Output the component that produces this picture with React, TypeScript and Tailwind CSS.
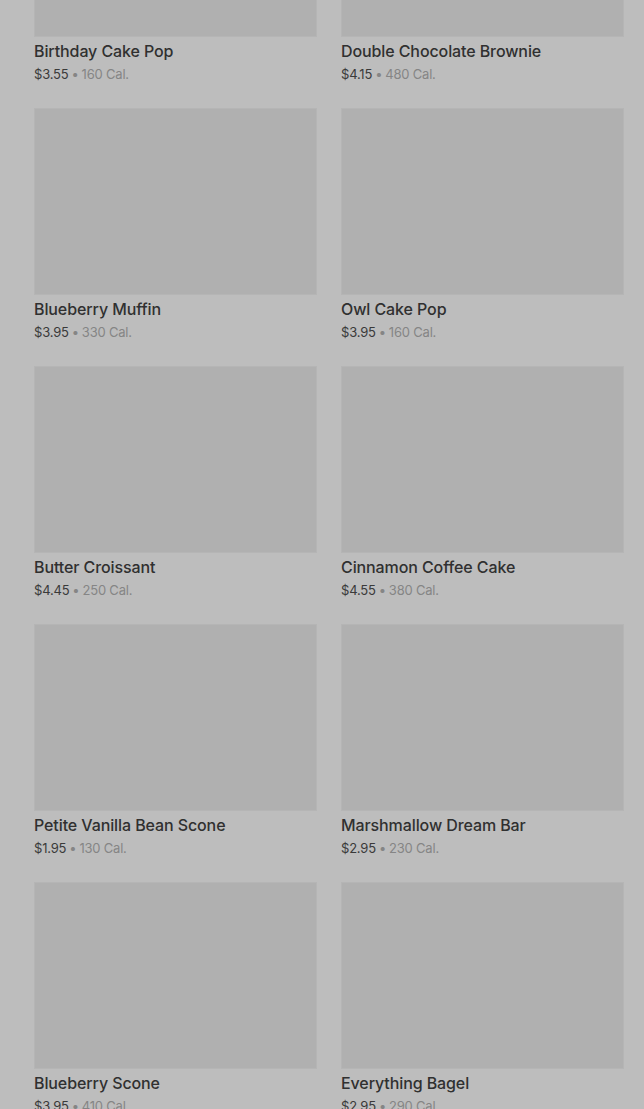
const items = [
  { name: "Birthday Cake Pop", price: "$3.55", cal: "160 Cal." },
  { name: "Double Chocolate Brownie", price: "$4.15", cal: "480 Cal." },
  { name: "Blueberry Muffin", price: "$3.95", cal: "330 Cal." },
  { name: "Owl Cake Pop", price: "$3.95", cal: "160 Cal." },
  { name: "Butter Croissant", price: "$4.45", cal: "250 Cal." },
  { name: "Cinnamon Coffee Cake", price: "$4.55", cal: "380 Cal." },
  { name: "Petite Vanilla Bean Scone", price: "$1.95", cal: "130 Cal." },
  { name: "Marshmallow Dream Bar", price: "$2.95", cal: "230 Cal." },
  { name: "Blueberry Scone", price: "$3.95", cal: "410 Cal." },
  { name: "Everything Bagel", price: "$2.95", cal: "290 Cal." },
  { name: "Chocolate Croissant", price: "$4.25", cal: "340 Cal." },
  { name: "Plain Bagel", price: "$2.45", cal: "280 Cal." },
];

function ItemCard({ name, price, cal }: (typeof items)[number]) {
  return (
    <div className="flex flex-col">
      <div className="h-[187px] w-full border border-[#b5b5b5] bg-[#b0b0b0]" />
      <h3 className="mt-1 text-[16px] font-medium leading-5 tracking-[-0.1px] text-[#303030]">
        {name}
      </h3>
      <p className="mt-1 h-[18px] text-[13px] leading-[18px] tracking-[-0.2px] text-[#858585]">
        <span className="text-[#3a3a3a]">{price}</span>
        <span className="mx-[3px]">•</span>
        {cal}
      </p>
    </div>
  );
}

export default function App() {
  return (
    <div className="h-[1109px] overflow-hidden bg-[#bdbdbd] font-['Inter',sans-serif]">
      <div className="-mt-[150px] grid grid-cols-[283px_283px] gap-x-6 gap-y-[25px] pl-[34px] pr-5">
        {items.map((item) => (
          <ItemCard key={item.name} {...item} />
        ))}
      </div>
    </div>
  );
}
